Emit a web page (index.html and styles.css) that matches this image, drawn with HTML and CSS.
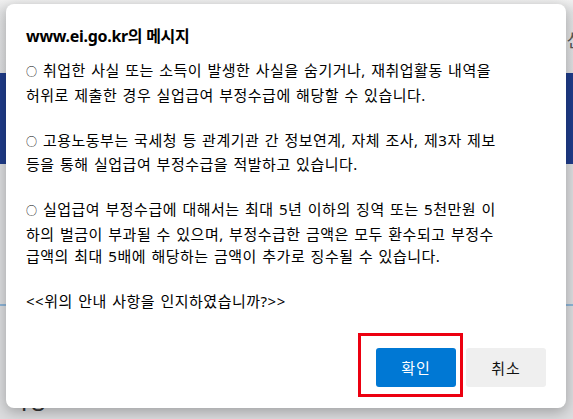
FILE: index.html
```html
<!DOCTYPE html>
<html lang="ko">
<head>
    <meta charset="UTF-8">
    <meta name="viewport" content="width=device-width, initial-scale=1.0">
    <title>www.ei.go.kr</title>
    <link rel="stylesheet" href="styles.css">
</head>
<body>
    <!-- 뒤쪽 페이지 (어둡게 보임) -->
    <div class="page">
        <div class="topbar"><span class="topword">신</span></div>
        <div class="nav"></div>
        <div class="content">
            <div class="rule"></div>
            <div class="bignum">18</div>
        </div>
    </div>

    <div class="dialog">
        <h1 class="title">www.ei.go.kr의 메시지</h1>
        <div class="message"><span class="dot">○</span> 취업한 사실 또는 소득이 발생한 사실을 숨기거나, 재취업활동 내역을 허위로 제출한 경우 실업급여 부정수급에 해당할 수 있습니다.

<span class="dot">○</span> 고용노동부는 국세청 등 관계기관 간 정보연계, 자체 조사, 제3자 제보 등을 통해 실업급여 부정수급을 적발하고 있습니다.

<span class="dot">○</span> 실업급여 부정수급에 대해서는 최대 5년 이하의 징역 또는 5천만원 이하의 벌금이 부과될 수 있으며, 부정수급한 금액은 모두 환수되고 부정수급액의 최대 5배에 해당하는 금액이 추가로 징수될 수 있습니다.

&lt;&lt;위의 안내 사항을 인지하였습니까?&gt;&gt;</div>
        <div class="buttons">
            <button class="btn btn-ok">확인</button>
            <button class="btn btn-cancel">취소</button>
        </div>
    </div>

    <div class="mark"></div>
</body>
</html>
```

FILE: styles.css
```css
* {
    padding: 0;
    margin: 0;
    box-sizing: border-box;
}

body {
    width: 573px;
    height: 419px;
    overflow: hidden;
    position: relative;
    background: #dcdddf;
    font-family: "Noto Sans", "Noto Sans CJK KR", sans-serif;
}

.page {
    height: 419px;
}

.topbar {
    height: 73px;
    background: linear-gradient(#f0f0f0, #e2e3e4 12px, #dddee0);
    display: flex;
    justify-content: flex-end;
    padding-top: 26px;
}

.topword {
    font-size: 18px;
    color: #555;
    margin-right: -10px;
}

.nav {
    height: 91px;
    background: #1f3c8a;
}

.content {
    padding-top: 140px;
}

.rule {
    height: 2px;
    background: #8db4d6;
}

.bignum {
    font-size: 26px;
    color: #333;
    padding-left: 16px;
    padding-top: 82px;
    line-height: 1;
}

/* 알림창 */
.dialog {
    position: absolute;
    left: 6px;
    top: 4px;
    width: 560px;
    height: 404px;
    background: #fff;
    border-radius: 8px;
    box-shadow: 0 4px 14px rgba(0, 0, 0, 0.28);
    padding: 20px 20px 21px 20px;
    display: flex;
    flex-direction: column;
}

.title {
    font-size: 16px;
    font-weight: bold;
    color: #000;
    line-height: 24px;
    letter-spacing: -0.3px;
}

.message {
    margin-top: 11px;
    width: 477px;
    font-size: 15px;
    letter-spacing: 0.5px;
    word-spacing: 1px;
    line-height: 22.5px;
    color: #000;
    white-space: pre-line;
}

.dot {
    font-size: 11px;
}

.buttons {
    margin-top: auto;
    display: flex;
    justify-content: flex-end;
    gap: 10px;
}

.btn {
    width: 80px;
    height: 39px;
    border: none;
    border-radius: 3px;
    font-family: "Noto Sans", "Noto Sans CJK KR", sans-serif;
    font-size: 15px;
    letter-spacing: 1px;
}

.btn-ok {
    background: #0078d4;
    color: #fff;
}

.btn-cancel {
    background: #efefef;
    color: #111;
}

/* 빨간 표시 */
.mark {
    position: absolute;
    left: 358px;
    top: 333px;
    width: 105px;
    height: 64px;
    border: 3px solid #ec0010;
}
```
